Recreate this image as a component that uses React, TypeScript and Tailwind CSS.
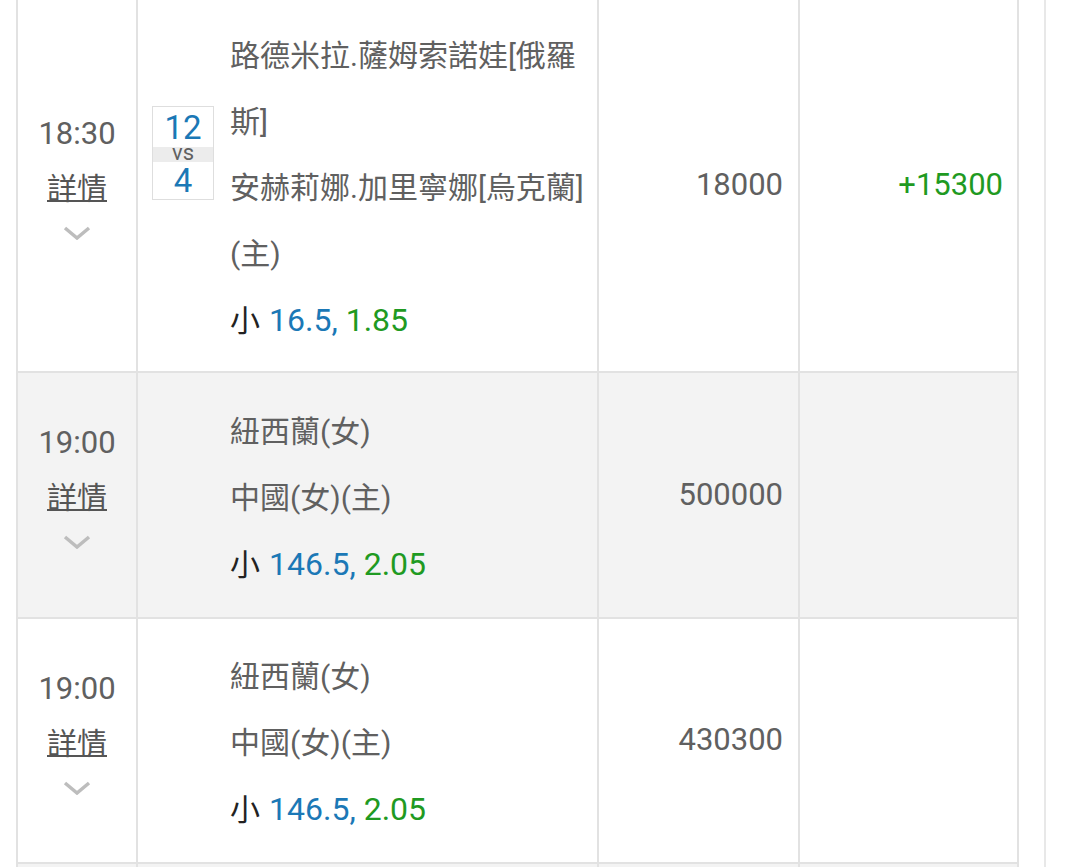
import React from "react"

type Row = {
  time: string
  score?: [string, string]
  home: string
  away: string
  line: string
  odds: string
  amount: string
  result?: string
  h: string
  bg: string
}

const rows: Row[] = [
  {
    time: "18:30",
    score: ["12", "4"],
    home: "路德米拉.薩姆索諾娃[俄羅斯]",
    away: "安赫莉娜.加里寧娜[烏克蘭](主)",
    line: "16.5",
    odds: "1.85",
    amount: "18000",
    result: "+15300",
    h: "h-[373px]",
    bg: "bg-white",
  },
  {
    time: "19:00",
    home: "紐西蘭(女)",
    away: "中國(女)(主)",
    line: "146.5",
    odds: "2.05",
    amount: "500000",
    h: "h-[246px]",
    bg: "bg-[#f3f3f3]",
  },
  {
    time: "19:00",
    home: "紐西蘭(女)",
    away: "中國(女)(主)",
    line: "146.5",
    odds: "2.05",
    amount: "430300",
    h: "h-[245px]",
    bg: "bg-white",
  },
]

function Chevron() {
  return (
    <svg width="28" height="14" viewBox="0 0 28 14" fill="none">
      <polyline points="2,2 14,12 26,2" stroke="#bdbdbd" strokeWidth="3.5" />
    </svg>
  )
}

function ScoreBox({ score }: { score: [string, string] }) {
  return (
    <div className="w-[62px] border border-[#dedede] bg-white">
      <div className="h-[40px] flex items-center justify-center text-[33px] leading-none text-[#1b78b6]">
        {score[0]}
      </div>
      <div className="h-[15px] bg-[#ececec] text-center text-[22px] leading-[12px] text-[#606060]">vs</div>
      <div className="h-[37px] flex items-center justify-center text-[33px] leading-none text-[#1b78b6]">
        {score[1]}
      </div>
    </div>
  )
}

export default function App() {
  return (
    <div className="min-h-screen bg-white flex font-[Roboto,'Noto_Sans_CJK_TC',sans-serif] text-[30px]">
      <div className="ml-4 w-[1003px] border-l-2 border-[#e2e2e2]">
        {rows.map((r, i) => (
          <div key={i} className={`flex border-b-2 border-[#e2e2e2] ${r.h} ${r.bg}`}>
            {/* time */}
            <div className="w-[120px] shrink-0 border-r-2 border-[#e2e2e2] flex flex-col items-center justify-center pb-4">
              <div className="text-[31px] leading-[50px] text-[#606060]">{r.time}</div>
              <div className="leading-[60px] text-[#555] underline decoration-2">詳情</div>
              <div className="h-[28px] flex items-center justify-center">
                <Chevron />
              </div>
            </div>

            {/* teams */}
            <div className="w-[461px] shrink-0 border-r-2 border-[#e2e2e2] flex">
              <div className="w-[92px] shrink-0 pl-[14px] pt-[106px]">
                {r.score && <ScoreBox score={r.score} />}
              </div>
              <div className="w-[362px] flex flex-col justify-center pt-[6px] leading-[66px] text-[#606060]">
                <div>{r.home}</div>
                <div>{r.away}</div>
                <div className="text-[32px]">
                  <span className="text-[30px] text-[#222]">小</span>
                  <span className="ml-[9px] text-[#1b78b6]">{r.line},</span>
                  <span className="ml-[8px] text-[#1f9a22]">{r.odds}</span>
                </div>
              </div>
            </div>

            {/* amount */}
            <div className="w-[201px] shrink-0 border-r-2 border-[#e2e2e2] flex items-center justify-end pr-[15px] text-[31px] text-[#606060]">
              {r.amount}
            </div>

            {/* result */}
            <div className="w-[219px] shrink-0 border-r-2 border-[#e2e2e2] flex items-center justify-end pr-[14px] text-[31px] text-[#1f9a22]">
              {r.result}
            </div>
          </div>
        ))}
        <div className="flex h-[60px] bg-[#f3f3f3]">
          <div className="w-[120px] border-r-2 border-[#e2e2e2]" />
          <div className="w-[461px] border-r-2 border-[#e2e2e2]" />
          <div className="w-[201px] border-r-2 border-[#e2e2e2]" />
          <div className="w-[219px] border-r-2 border-[#e2e2e2]" />
        </div>
      </div>
      <div className="ml-[25px] w-[2px] bg-[#e8e8e8]" />
    </div>
  )
}
